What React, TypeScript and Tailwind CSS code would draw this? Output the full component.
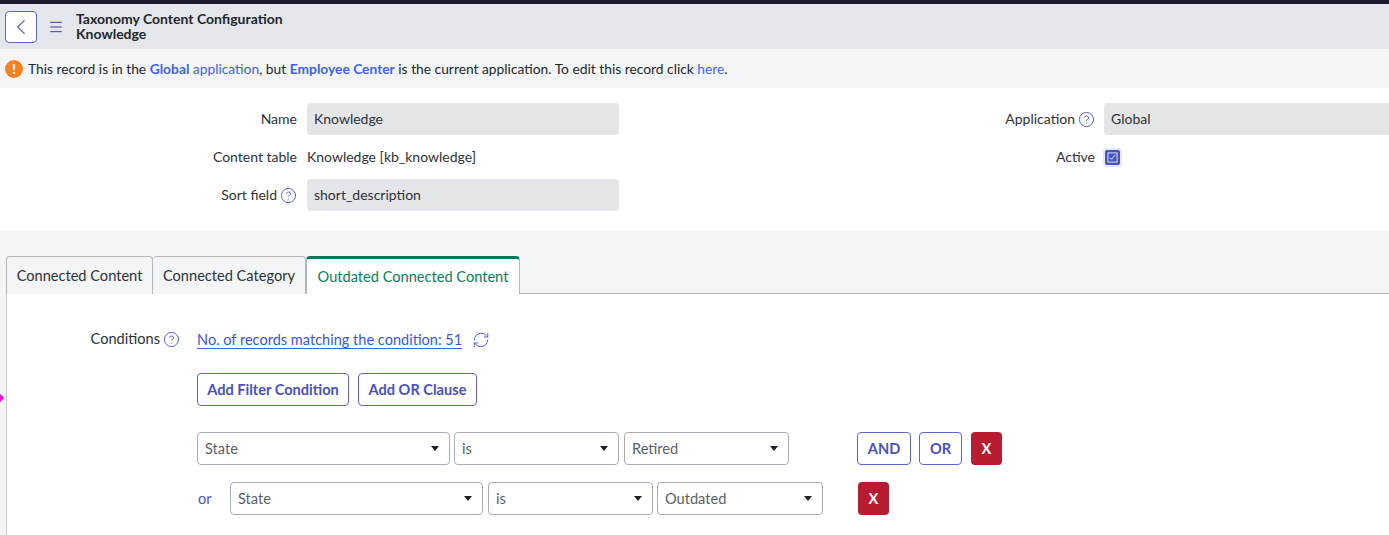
import { ChevronLeft, Menu, RefreshCw, CircleHelp } from 'lucide-react';

const font = "font-['Lato','Liberation_Sans',sans-serif]";

function Help() {
    return <CircleHelp className="h-[17px] w-[17px] text-[#4f52bd]" strokeWidth={1.3} />;
}

function FieldLabel({ text, help }: { text: string; help?: boolean }) {
    return (
        <div className="flex items-center justify-end gap-[3px] text-[14px] text-[#2e3238]">
            <span className="pb-[2px]">{text}</span>
            {help && <Help />}
        </div>
    );
}

function ReadOnly({ value, className = '' }: { value: string; className?: string }) {
    return (
        <div className={`flex h-8 items-center rounded-l-[4px] bg-[#e3e5e9] px-[7px] pb-[2px] text-[14px] text-[#2e3238] ${className}`}>
            {value}
        </div>
    );
}

function Select({ value, width }: { value: string; width: string }) {
    return (
        <div className={`flex h-[33px] items-center justify-between rounded-[4px] border border-[#a9acb4] bg-white pl-[7px] pr-[10px] text-[14.6px] text-[#5b5f67] ${width}`}>
            <span className="pt-px">{value}</span>
            <span className="h-0 w-0 border-x-[4.5px] border-t-[5px] border-x-transparent border-t-[#1f2126]" />
        </div>
    );
}

function OutlineButton({ label, width }: { label: string; width: string }) {
    return (
        <button className={`flex h-[33px] items-center justify-center rounded-[4px] border border-[#5f63cc] bg-white pt-px text-[14.6px] font-bold text-[#4a50bd] ${width}`}>
            {label}
        </button>
    );
}

function RemoveButton() {
    return (
        <button className="flex h-[33px] w-[31px] items-center justify-center rounded-[4px] bg-[#b81c30] text-[14.6px] font-bold text-white">
            X
        </button>
    );
}

export default function App() {
    return (
        <div className={`relative flex h-[535px] w-[1389px] flex-col overflow-hidden bg-white ${font}`}>
            {/* Top strip */}
            <div className="h-1 bg-[#1a1a2b]" />

            {/* Header */}
            <div className="flex h-[45px] items-center bg-[#e3e6ea] pl-[5px]">
                <button className="flex h-8 w-8 items-center justify-center rounded-[4px] border border-[#5f63cc] bg-white">
                    <ChevronLeft className="h-[26px] w-[26px] text-[#5f63cc]" strokeWidth={1} />
                </button>
                <Menu className="ml-[11px] h-4 w-4 text-[#3c3f9c]" strokeWidth={1.5} />
                <div className="ml-[12px] pb-[2px] text-[14px] font-bold leading-[15px] text-[#23262b]">
                    <div>Taxonomy Content Configuration</div>
                    <div>Knowledge</div>
                </div>
            </div>

            {/* Record notice */}
            <div className="flex h-[39px] items-center bg-[#f4f5f7] pl-[5px] text-[13.8px] text-[#23262b]">
                <span className="mr-[5px] flex h-[18px] w-[18px] items-center justify-center rounded-full bg-[#f5821f] text-[14px] font-black leading-none text-white">!</span>
                <span className="pt-[2px]">
                    This record is in the <a className="font-bold text-[#3d63e8]">Global</a>{' '}
                    <a className="text-[#3d63e8]">application</a>, but{' '}
                    <a className="font-bold text-[#3d63e8]">Employee Center</a> is the current application. To edit this record click{' '}
                    <a className="text-[#3d63e8]">here</a>.
                </span>
            </div>

            {/* Form */}
            <div className="grid h-[143px] grid-cols-[297px_312px_486px_9px_285px] grid-rows-[32px_32px_32px] items-center gap-y-[6px] pt-[15px]">
                <FieldLabel text="Name" />
                <ReadOnly value="Knowledge" className="ml-[10px] w-[312px] rounded-r-[4px]" />
                <FieldLabel text="Application" help />
                <div />
                <ReadOnly value="Global" />

                <FieldLabel text="Content table" />
                <div className="ml-[10px] pb-[2px] text-[14px] text-[#2e3238]">Knowledge [kb_knowledge]</div>
                <FieldLabel text="Active" />
                <div />
                <div className="-ml-px flex h-[19px] w-[19px] items-center justify-center rounded-[4px] bg-[#e6e8f8]">
                    <div className="flex h-[15px] w-[15px] items-center justify-center rounded-[2px] bg-[#4553c4]">
                        <svg viewBox="0 0 12 12" className="h-[11px] w-[11px]" fill="none" stroke="#ffffff" strokeWidth="0.9">
                            <rect x="1" y="1" width="10" height="10" />
                            <path d="M3 6l2 2 4-5" />
                        </svg>
                    </div>
                </div>

                <FieldLabel text="Sort field" help />
                <ReadOnly value="short_description" className="ml-[10px] w-[312px] rounded-r-[4px]" />
            </div>

            {/* Tabs */}
            <div className="flex h-[63px] items-end bg-[#f4f5f7] pl-[6px]">
                <div className="flex h-[38px] w-[147px] items-center justify-center rounded-t-[4px] border border-b-0 border-[#b4b7bf] text-[14.6px] text-[#2e3238]">
                    Connected Content
                </div>
                <div className="flex h-[38px] w-[153px] items-center justify-center rounded-t-[4px] border border-b-0 border-l-0 border-[#b4b7bf] text-[14.6px] text-[#2e3238]">
                    Connected Category
                </div>
                <div className="flex h-[38px] w-[214px] items-center justify-center rounded-t-[4px] border-x border-t-[3px] border-x-[#b4b7bf] border-t-[#047a5a] bg-white text-[14.6px] text-[#0a7d5b]">
                    Outdated Connected Content
                </div>
                <div className="h-px flex-1 bg-[#b4b7bf]" />
            </div>

            {/* Condition builder */}
            <div className="flex-1 bg-[#f4f5f7] pl-[6px]">
                <div className="h-full border-l border-[#c9cbd1] bg-white pl-[190px] pt-[30px]">
                    <div className="flex h-[31px] items-center">
                        <div className="-ml-[108px] flex w-[91px] items-center justify-end gap-[3px] text-[14.6px] text-[#2e3238]">
                            <span className="pb-[2px]">Conditions</span>
                            <Help />
                        </div>
                        <a className="ml-[17px] border-b border-[#3d63e8] text-[14.55px] leading-[17px] text-[#3d55d8]">
                            No. of records matching the condition: 51
                        </a>
                        <RefreshCw className="ml-[10px] h-[18px] w-[18px] text-[#4f52bd]" strokeWidth={1.2} />
                    </div>

                    <div className="mt-[18px] flex gap-[9px]">
                        <OutlineButton label="Add Filter Condition" width="w-[152px]" />
                        <OutlineButton label="Add OR Clause" width="w-[119px]" />
                    </div>

                    <div className="mt-[26px] flex items-center">
                        <Select value="State" width="w-[253px]" />
                        <div className="w-1" />
                        <Select value="is" width="w-[165px]" />
                        <div className="w-[5px]" />
                        <Select value="Retired" width="w-[165px]" />
                        <OutlineButton label="AND" width="ml-[68px] w-[54px]" />
                        <OutlineButton label="OR" width="ml-2 w-[43px]" />
                        <div className="ml-[9px]"><RemoveButton /></div>
                    </div>

                    <div className="mt-[17px] flex items-center">
                        <span className="w-[33px] pl-px text-[14.6px] text-[#4f52bd]">or</span>
                        <Select value="State" width="w-[253px]" />
                        <div className="w-[5px]" />
                        <Select value="is" width="w-[165px]" />
                        <div className="w-1" />
                        <Select value="Outdated" width="w-[166px]" />
                        <div className="ml-[35px]"><RemoveButton /></div>
                    </div>
                </div>
            </div>

            {/* Stray marker on the left edge */}
            <div className="absolute left-[-3px] top-[395px] h-[6px] w-[6px] rotate-45 bg-[#f010e0]" />
        </div>
    );
}
